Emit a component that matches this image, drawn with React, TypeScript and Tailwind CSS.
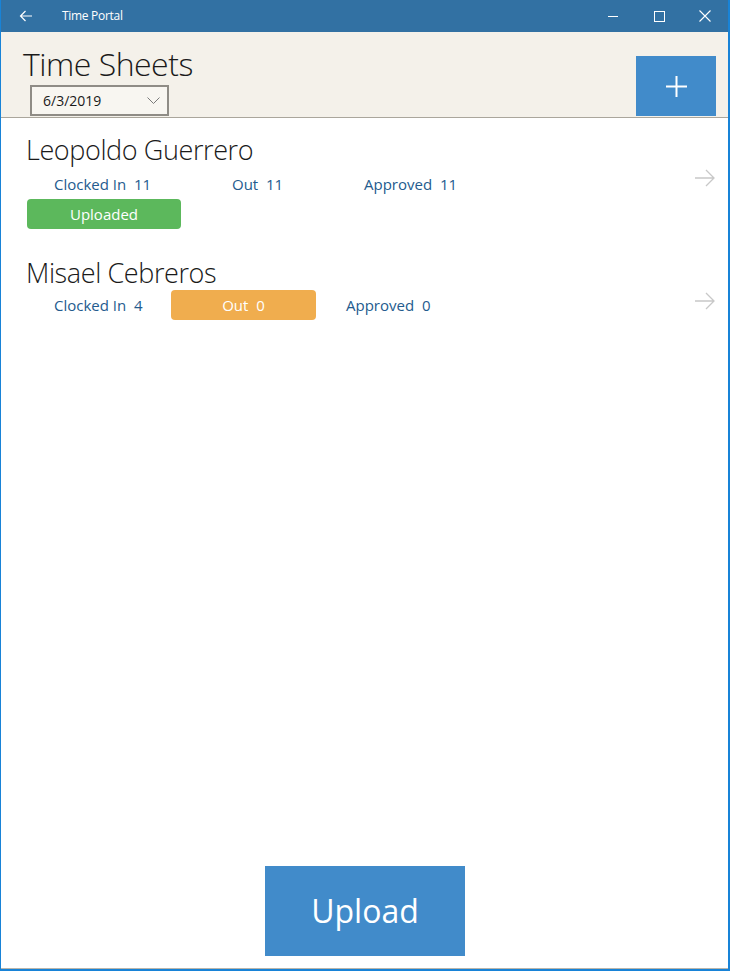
import React from 'react';

const font = { fontFamily: '"Open Sans", "Noto Sans", sans-serif' };

type Row = {
    name: string;
    clockedIn: number;
    out: number;
    approved: number;
    uploaded: boolean;
};

const rows: Row[] = [
    { name: 'Leopoldo Guerrero', clockedIn: 11, out: 11, approved: 11, uploaded: true },
    { name: 'Misael Cebreros', clockedIn: 4, out: 0, approved: 0, uploaded: false },
];

const ArrowRight: React.FC = () => (
    <svg width="22" height="18" viewBox="0 0 22 18" fill="none" stroke="#c8c8c8" strokeWidth="1.3">
        <path d="M1 9h19M12 1l8 8-8 8" />
    </svg>
);

const TitleBar: React.FC = () => (
    <div className="h-[32px] bg-[#3271a3] flex items-center text-white shrink-0">
        <div className="w-[50px] flex justify-center">
            <svg width="14" height="12" viewBox="0 0 14 12" fill="none" stroke="white" strokeWidth="1.2">
                <path d="M13 6H1.5M6.5 1L1.5 6l5 5" />
            </svg>
        </div>
        <span className="text-[12px] ml-[11px] tracking-[-0.3px]" style={font}>Time Portal</span>
        <div className="ml-auto flex items-center">
            <div className="w-[46px] flex justify-center">
                <svg width="11" height="11" viewBox="0 0 11 11" stroke="white" strokeWidth="1"><path d="M0 5.5h10" /></svg>
            </div>
            <div className="w-[46px] flex justify-center">
                <svg width="11" height="11" viewBox="0 0 11 11" fill="none" stroke="white" strokeWidth="1"><rect x="0.5" y="0.5" width="10" height="10" /></svg>
            </div>
            <div className="w-[46px] flex justify-center">
                <svg width="12" height="12" viewBox="0 0 12 12" stroke="white" strokeWidth="1.1"><path d="M0.5 0.5l11 11M11.5 0.5l-11 11" /></svg>
            </div>
        </div>
    </div>
);

const Header: React.FC = () => (
    <div className="h-[86px] bg-[#f4f1ea] border-b border-[#aaa69c] flex shrink-0" style={font}>
        <div className="flex-1 flex flex-col pl-[22px]">
            <h1 className="text-[32px] font-light text-[#1a1a1a] leading-none mt-[16px] tracking-[-0.5px]">Time Sheets</h1>
            <div className="mt-[5px] ml-[7px] w-[139px] h-[31px] border-2 border-[#8f8c86] bg-[#f8f6f1] flex items-center pl-[11px] pr-[7px]">
                <span className="text-[14px] text-[#1a1a1a]">6/3/2019</span>
                <svg className="ml-auto" width="13" height="8" viewBox="0 0 13 8" fill="none" stroke="#7a7a7a" strokeWidth="1">
                    <path d="M0.5 0.5l6 6 6-6" />
                </svg>
            </div>
        </div>
        <div className="self-end mb-[1px] mr-[12px] w-[80px] h-[60px] bg-[#418bca] flex items-center justify-center">
            <svg width="21" height="21" viewBox="0 0 21 21" stroke="white" strokeWidth="2">
                <path d="M10.5 0v21M0 10.5h21" />
            </svg>
        </div>
    </div>
);

const SheetRow: React.FC<{ row: Row }> = ({ row }) => (
    <div className="flex pr-[12px]" style={font}>
        <div className="flex-1 pl-[25px]">
            <div className="text-[27px] font-light text-[#1a1a1a] leading-[34px] tracking-[-0.4px]">{row.name}</div>
            {row.uploaded ? (
                <>
                    <div className="flex items-center h-[30px] text-[15px] text-[#245b8e] pl-[28px] mt-[2px]">
                        <span className="w-[178px]">Clocked In&nbsp; {row.clockedIn}</span>
                        <span className="w-[132px]">Out&nbsp; {row.out}</span>
                        <span>Approved&nbsp; {row.approved}</span>
                    </div>
                    <div className="w-[154px] h-[30px] ml-[1px] rounded-[4px] bg-[#5cb85c] text-white text-[15px] flex items-center justify-center">
                        Uploaded
                    </div>
                </>
            ) : (
                <div className="flex items-center h-[30px] text-[15px] text-[#245b8e] pl-[28px]">
                    <span className="w-[117px]">Clocked In&nbsp; {row.clockedIn}</span>
                    <span className="w-[145px] h-[30px] rounded-[4px] bg-[#f0ad4e] text-white flex items-center justify-center">
                        Out&nbsp; {row.out}
                    </span>
                    <span className="ml-[30px]">Approved&nbsp; {row.approved}</span>
                </div>
            )}
        </div>
        <div className="flex items-center self-start h-[30px] mt-[30px]">
            <ArrowRight />
        </div>
    </div>
);

const App: React.FC = () => {
    return (
        <div className="w-[730px] h-[971px] flex flex-col bg-white border-l border-r-2 border-b-2 border-[#1883d7] overflow-hidden">
            <TitleBar />
            <Header />
            <div className="flex-1 flex flex-col bg-white border-b border-[#b9b5ab]">
                <div className="flex flex-col gap-[27px] pt-[15px]">
                    {rows.map(row => (
                        <SheetRow key={row.name} row={row} />
                    ))}
                </div>
                <div className="mt-auto flex justify-center mb-[12px] pl-[1px]">
                    <button className="w-[200px] h-[90px] bg-[#418bca] text-white text-[32px]" style={font}>
                        Upload
                    </button>
                </div>
            </div>
        </div>
    );
};

export default App;
